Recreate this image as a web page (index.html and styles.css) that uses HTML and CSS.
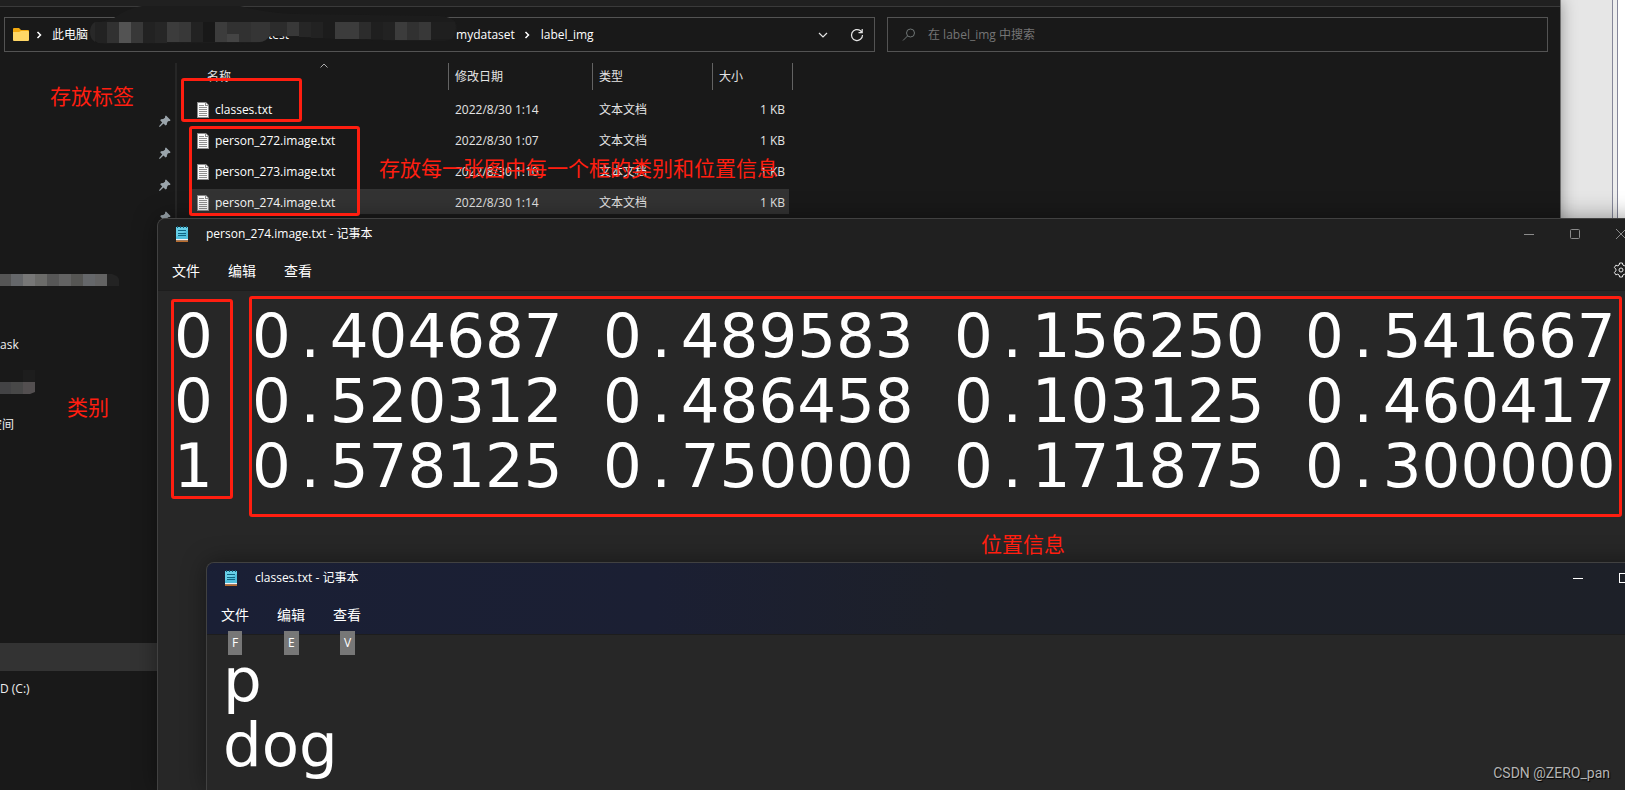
FILE: index.html
```html
<!DOCTYPE html>
<html lang="zh-CN">
<head>
<meta charset="utf-8">
<title>label_img</title>
<link rel="stylesheet" href="styles.css">
</head>
<body>
<svg width="0" height="0" class="defs" aria-hidden="true">
  <symbol id="pin" viewBox="0 0 12 12"><path d="M7 0.500 11.500 5 11 6 9 6.300 8 8 7.800 9.800 6.500 10.600 4.500 8.600 0.800 12 0 11.200 3.200 7.400 1.200 5.200 2 4.200 4.200 4 6 2.800 6.200 1Z" fill="#9aa4ab"/></symbol>
  <symbol id="txt" viewBox="0 0 12 16"><path d="M0 0h9l3 3v13H0z" fill="#8c8c8c"/><path d="M1 1h7v3h3v11H1z" fill="#fafafa"/><path d="M9 1l2 2H9z" fill="#fff"/><path d="M2 3.500h5M2 5.500h8M2 7.500h8M2 9.500h8M2 11.500h8M2 13.500h8" stroke="#8f8f8f"/></symbol>
  <symbol id="notepad" viewBox="0 0 12 16"><path d="M0 1h12v12H0z" fill="#50bfdd"/><path d="M0 1h12v3L0 11z" fill="#67cfe8"/><path d="M0 13h12v1.500H0z" fill="#f4f4f4"/><path d="M0 14.500h12V16H0z" fill="#b96b2c"/><path d="M1.500 0v2M4.500 0v2M7.500 0v2M10.500 0v2" stroke="#125f78"/><path d="M2 4.500h8M2 7.500h8M2 9.500h8" stroke="#0f6583"/></symbol>
</svg>
<div class="desktop">
  <div class="page-edge"></div>

  <section class="explorer" aria-label="label_img">
    <div class="tabs-strip"></div>
    <div class="toolbar">
      <nav class="address">
        <svg class="folder" viewBox="0 0 16 13"><path d="M0 1a1 1 0 0 1 1-1h5l2 2h7a1 1 0 0 1 1 1v8H0z" fill="#f2a90f"/><path d="M0 4h6l2-1h7a1 1 0 0 1 1 1v8a1 1 0 0 1-1 1H1a1 1 0 0 1-1-1z" fill="#ffd766"/></svg>
        <svg class="chev" viewBox="0 0 6 8"><path d="M1.500 1l3 3-3 3" /></svg>
        <a href="#">此电脑</a>
        <span class="hidden-path">test</span>
        <a href="#">mydataset</a>
        <svg class="chev" viewBox="0 0 6 8"><path d="M1.500 1l3 3-3 3" /></svg>
        <a href="#">label_img</a>
        <span class="grow"></span>
        <button class="icon-btn" aria-label="历史记录"><svg width="10" height="6" viewBox="0 0 10 6"><path d="M1 1l4 4 4-4"/></svg></button>
        <button class="icon-btn" aria-label="刷新"><svg width="14" height="14" viewBox="0 0 14 14"><path d="M12.500 7A5.500 5.500 0 1 1 10.500 2.800L12 4.500M12.200 1v3.700H8.500"/></svg></button>
      </nav>
      <label class="search">
        <svg width="14" height="14" viewBox="0 0 14 14"><circle cx="8.500" cy="5" r="4"/><path d="M5.500 8L1 12.500"/></svg>
        <input type="text" aria-label="搜索" placeholder="在 label_img 中搜索">
      </label>
    </div>
    <div class="panes">
      <aside class="side">
        <div class="pins">
          <svg><use href="#pin"/></svg><svg><use href="#pin"/></svg><svg><use href="#pin"/></svg><svg><use href="#pin"/></svg>
        </div>
        <svg class="mosaic-a" width="120" height="12" viewBox="0 0 120 12"><path fill="#232323" d="M107 0h5q7 2 7 6v6h-12z"/><path fill="#555" d="M0 0h11v12H0z"/><path fill="#65676a" d="M11 0h12v12H11zM83 0h12v12H83z"/><path fill="#777" d="M23 0h12v12H23z"/><path fill="#6b6b69" d="M35 0h12v12H35z"/><path fill="#575757" d="M47 0h12v12H47z"/><path fill="#636363" d="M59 0h12v12H59zM95 0h12v12H95z"/><path fill="#565654" d="M71 0h12v12H71z"/></svg>
        <span class="side-text ask">ask</span>
        <svg class="mosaic-b" width="35" height="24" viewBox="0 0 35 24"><path fill="#1d1d1d" d="M23 0h12v12H23z"/><path fill="#434345" d="M0 12h11v12H0z"/><path fill="#484848" d="M11 12h12v12H11z"/><path fill="#534f50" d="M23 12h12v10l-5 2h-7z"/></svg>
        <span class="side-text space">空间</span>
        <span class="side-text drive-sel"></span>
        <span class="side-text drive">D (C:)</span>
      </aside>
      <div class="list-wrap">
        <table class="files">
          <thead><tr><th><svg class="sort" viewBox="0 0 8 5"><path d="M.5 4.500L4 1l3.500 3.500"/></svg>名称</th><th>修改日期</th><th>类型</th><th>大小</th></tr></thead>
          <tbody>
            <tr><td><svg><use href="#txt"/></svg>classes.txt</td><td>2022/8/30 1:14</td><td>文本文档</td><td>1 KB</td></tr>
            <tr><td><svg><use href="#txt"/></svg>person_272.image.txt</td><td>2022/8/30 1:07</td><td>文本文档</td><td>1 KB</td></tr>
            <tr><td><svg><use href="#txt"/></svg>person_273.image.txt</td><td>2022/8/30 1:10</td><td>文本文档</td><td>1 KB</td></tr>
            <tr class="selected"><td><svg><use href="#txt"/></svg>person_274.image.txt</td><td>2022/8/30 1:14</td><td>文本文档</td><td>1 KB</td></tr>
          </tbody>
        </table>
      </div>
    </div>
    <svg class="smear" width="460" height="50" viewBox="0 0 460 50">
      <path fill="#1c1c1c" d="M114 18Q128 8 142 6H240Q270 14 300 14L440 16Q457 17 457 28 457 40 445 41H400L310 38 300 37 270 36Q266 43 257 43L104 44Q90 42 90 32 92 22 104 21Z"/>
      <path fill="#282828" d="M95 22v20q-5-3-5-10 0-7 5-10z"/>
      <path fill="#222" d="M95 22h12v21H98l-3-2zM143 22h12v21h-12zM191 22h12v20h-12zM311 22h12v16h-12zM383 22h12v18h-12z"/>
      <path fill="#313131" d="M107 22h12v21h-12zM227 22h24v20h-24zM407 22h12v18h-12z"/>
      <path fill="#535353" d="M119 22h12v21h-12z"/>
      <path fill="#383838" d="M131 22h12v21h-12zM179 22h12v20h-12zM287 22h12v14h-12zM419 22h12v18h-12z"/>
      <path fill="#262626" d="M155 22h12v21h-12zM299 22h12v15h-12z"/>
      <path fill="#3c3c3c" d="M167 22h12v20h-12zM215 22h12v20h-12zM335 22h24v17h-24zM395 22h12v18h-12z"/>
      <path fill="#181818" d="M203 22h12v20h-12z"/>
      <path fill="#353535" d="M251 22h19v13q-4 7-10 7h-9z"/>
      <path fill="#2c2c2c" d="M270 22h17v14h-17zM359 22h12v17h-12z"/>
      <path fill="#1f1f1f" d="M371 22h12v17h-12zM431 22h24q3 8-3 17h-21z"/>
      <path fill="#444" d="M227 34h12v8h-12z"/>
    </svg>
  </section>

  <section class="notepad first" aria-label="person_274.image.txt">
    <header class="np-head">
      <div class="title"><svg class="app"><use href="#notepad"/></svg><span>person_274.image.txt - 记事本</span><span class="grow"></span>
        <button aria-label="最小化"><svg viewBox="0 0 10 10"><path d="M0 5.500h10"/></svg></button><button aria-label="最大化"><svg viewBox="0 0 10 10"><rect x=".5" y=".5" width="9" height="9" rx="1"/></svg></button><button aria-label="关闭"><svg viewBox="0 0 10 10"><path d="M0 0l10 10M10 0L0 10"/></svg></button>
      </div>
      <div class="menu"><button>文件</button><button>编辑</button><button>查看</button><span class="grow"></span>
        <button class="gear" aria-label="设置"><svg width="16" height="16" viewBox="0 0 16 16"><circle cx="8" cy="8" r="2"/><path d="M6.600 1h2.800l.5 2 1.300.8 2-.6 1.400 2.400-1.500 1.500v1.800l1.500 1.500-1.400 2.400-2-.6-1.300.8-.5 2H6.600l-.5-2-1.300-.8-2 .6-1.400-2.400 1.500-1.500V7.100L1.400 5.600l1.400-2.400 2 .6L6.100 3z"/></svg></button></div>
    </header>
    <div class="doc numbers" contenteditable="true" role="textbox" aria-multiline="true" aria-label="文本编辑器" spellcheck="false">
      <div class="line"><span>0</span><span>0<i>.</i>404687</span><span>0<i>.</i>489583</span><span>0<i>.</i>156250</span><span>0<i>.</i>541667</span></div>
      <div class="line"><span>0</span><span>0<i>.</i>520312</span><span>0<i>.</i>486458</span><span>0<i>.</i>103125</span><span>0<i>.</i>460417</span></div>
      <div class="line"><span>1</span><span>0<i>.</i>578125</span><span>0<i>.</i>750000</span><span>0<i>.</i>171875</span><span>0<i>.</i>300000</span></div>
    </div>
  </section>

  <section class="notepad second" aria-label="classes.txt">
    <header class="np-head">
      <div class="title"><svg class="app"><use href="#notepad"/></svg><span>classes.txt - 记事本</span><span class="grow"></span>
        <button aria-label="最小化"><svg viewBox="0 0 10 10"><path d="M0 5.500h10"/></svg></button><button aria-label="最大化"><svg viewBox="0 0 10 10"><rect x=".5" y=".5" width="9" height="9"/></svg></button><button aria-label="关闭"><svg viewBox="0 0 10 10"><path d="M0 0l10 10M10 0L0 10"/></svg></button>
      </div>
      <div class="menu"><button>文件<kbd>F</kbd></button><button>编辑<kbd>E</kbd></button><button>查看<kbd>V</kbd></button></div>
    </header>
    <textarea class="doc" aria-label="文本编辑器" spellcheck="false">p
dog</textarea>
  </section>

  <div class="mark mark-classes"></div>
  <div class="mark mark-persons"></div>
  <div class="mark mark-ids"></div>
  <div class="mark mark-coords"></div>
  <span class="note note-labels">存放标签</span>
  <span class="note note-files">存放每一张图中每一个框的类别和位置信息</span>
  <span class="note note-class">类别</span>
  <span class="note note-position">位置信息</span>
  <span class="watermark">CSDN @ZERO_pan</span>
</div>
</body>
</html>
```
FILE: styles.css
```css
* { box-sizing: border-box; }
body { margin: 0; background: #191919; color: #fff; font: 12px/16px "Open Sans", "Noto Sans CJK SC", sans-serif; overflow: hidden; }
button { border: 0; padding: 0; background: none; color: inherit; font: inherit; }
a { color: inherit; text-decoration: none; }
svg { display: block; flex: none; fill: none; }
.defs { position: absolute; }
.grow { flex: 1; }
.desktop { position: relative; height: 100vh; overflow: hidden; background: #e6e6e6; }
.page-edge { position: absolute; top: 0; right: 0; bottom: 0; width: 13px; background: linear-gradient(90deg, #85879a 1px, #eee 1px, #eee 5px, #85879a 5px, #85879a 6px, #fff 6px); }

/* Explorer */
.explorer { position: absolute; top: 0; left: 0; right: 65px; bottom: 0; background: #191919; box-shadow: 0 0 16px rgba(0,0,0,.4), 1px 0 0 #888; display: flex; flex-direction: column; }
.tabs-strip { height: 7px; background: #202020; border-bottom: 1px solid #3a3a3a; }
.toolbar { display: grid; grid-template-columns: 871fr 661fr; gap: 12px; padding: 10px 12px 0 4px; }
.address, .search { display: flex; align-items: center; height: 35px; border: 1px solid #535353; }
.address { padding: 0 0 0 8px; }
.search { padding-left: 14px; gap: 12px; }
.search svg { stroke: #6f7575; }
.search input { flex: 1; border: 0; outline: 0; padding: 0; background: none; color: #fff; font: inherit; }
.search input::placeholder { color: #757575; opacity: 1; }
.folder { width: 16px; height: 13px; }
.chev { width: 6px; height: 8px; margin: 0 10px 0 7px; stroke: #fff; stroke-width: 1.500; }
.address a + .chev { margin: 0 11px 0 9px; }
.hidden-path { width: 368px; padding-left: 180px; }
.icon-btn { display: grid; place-items: center; width: 34px; height: 33px; }
.icon-btn svg { stroke: #e4e4e4; stroke-width: 1.200; }
.panes { flex: 1; display: flex; padding-top: 11px; }
.side { width: 177px; display: flex; flex-direction: column; border-right: 2px solid #262626; }
.pins { display: grid; gap: 20px; justify-content: end; padding: 52px 4px 0 0; }
.pins svg { width: 12px; height: 12px; }
.mosaic-a { margin-top: 51px; }
.side-text { color: #eee; }
.ask { margin-top: 51px; }
.mosaic-b { margin-top: 17px; }
.space { margin: 23px 0 0 -10px; }
.drive-sel { height: 28px; margin-top: 210px; background: #333; }
.drive { margin-top: 10px; }
.list-wrap { padding-left: 1px; }
.files { table-layout: fixed; width: 615px; border-collapse: separate; border-spacing: 0; color: #e4e4e4; }
.files th { position: relative; height: 27px; padding: 0 0 0 6px; text-align: left; font-weight: 400; border-right: 1px solid #636363; }
.files th:first-child { width: 271px; padding-left: 29px; }
.files th:nth-child(2) { width: 144px; }
.files th:nth-child(3) { width: 120px; }
.files th:nth-child(4) { width: 80px; }
.sort { position: absolute; top: 0; left: 142px; width: 8px; height: 5px; stroke: #aaa; }
.files td { height: 31px; padding: 8px 0 0 6px; }
.files td:first-child { display: flex; align-items: center; gap: 6px; padding-left: 19px; color: #fff; }
.files td svg { width: 12px; height: 16px; }
.files td:last-child { text-align: right; padding-right: 8px; }
.selected { background: linear-gradient(#333, #333) 14px 6px / 597px 26px no-repeat; }
.smear { position: absolute; top: 0; left: 0; }

/* Notepad */
.notepad { position: absolute; bottom: 0; display: flex; flex-direction: column; background: #272727; border: 1px solid #414141; border-bottom: 0; border-radius: 8px 8px 0 0; box-shadow: 0 0 24px rgba(0,0,0,.4); overflow: hidden; }
.first { top: 218px; left: 157px; right: -20px; }
.second { top: 562px; left: 206px; right: -69px; }
.np-head { position: relative; z-index: 1; flex: none; background: #202020; border-bottom: 1px solid #1d1d1d; }
.second .np-head { background: linear-gradient(90deg, #1a1f35, #1b1f33 30%, #1d2029 50%, #1d2028); }
.title { display: flex; align-items: center; height: 30px; padding-left: 18px; }
.app { width: 12px; height: 16px; margin-right: 18px; }
.title button { display: grid; place-items: center; width: 46px; height: 28px; }
.title button svg { width: 10px; height: 10px; stroke: #8b8b8b; }
.second .title button svg { stroke: #fff; }
.menu { display: flex; align-items: center; gap: 28px; height: 41px; padding-left: 14px; font-size: 14px; line-height: 20px; }
.menu button { position: relative; padding-top: 3px; }
.menu .gear { margin-right: 15px; padding: 0; }
.gear svg { stroke: #e8e8e8; }
.menu kbd { position: absolute; top: 29px; left: 50%; margin-left: -7px; padding: 0 4px; background: #777; color: #fff; font: 12px/24px "Open Sans", sans-serif; }
.doc { flex: 1; width: 100%; margin: 0; border: 0; outline: 0; resize: none; overflow: hidden; background: transparent; color: #fff; font: 61px/65px "DejaVu Sans", sans-serif; padding: 12px 0 0 16px; }
.line { display: grid; grid-template-columns: 78px repeat(4, 351px); white-space: nowrap; }
.line i { display: inline-block; width: 39px; text-align: center; font-style: normal; }

/* Annotations */
.mark { position: absolute; border: 3px solid #ff1e10; border-radius: 3px; pointer-events: none; }
.mark-classes { left: 181px; top: 78px; width: 121px; height: 44px; }
.mark-persons { left: 189px; top: 126px; width: 171px; height: 90px; }
.mark-ids { left: 171px; top: 299px; width: 62px; height: 200px; }
.mark-coords { left: 249px; top: 296px; right: 3px; height: 221px; }
.note { position: absolute; color: #ff1e10; font: 400 21px/28px "Noto Sans CJK SC", sans-serif; white-space: nowrap; }
.note-labels { left: 50px; top: 81px; }
.note-files { left: 379px; top: 153px; }
.note-class { left: 67px; top: 392px; }
.note-position { left: 981px; top: 529px; }
.watermark { position: absolute; right: 15px; bottom: 7px; color: #b4b4b4; font: 14px/20px Roboto, sans-serif; text-shadow: 1px 1px 1px #000; }
```
